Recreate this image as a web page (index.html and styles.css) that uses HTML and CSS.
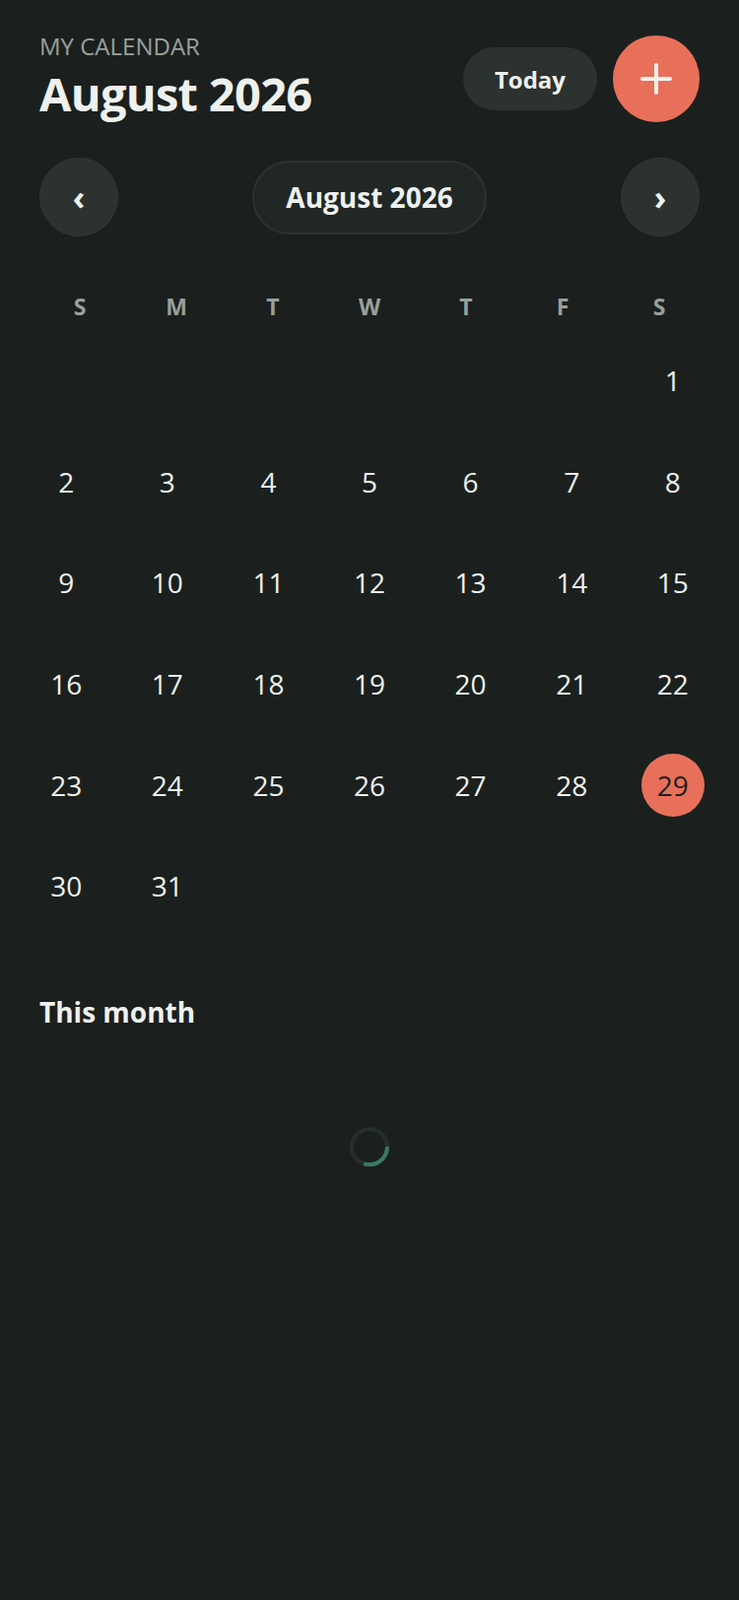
FILE: index.html
```html
<!DOCTYPE html>
<html lang="en">
<head>
    <meta charset="UTF-8">
    <meta name="viewport" content="width=device-width, initial-scale=1.0">
    <title>My Calendar</title>
    <link rel="stylesheet" href="styles.css">
</head>
<body>
    <div class="app">
        <div class="header">
            <div class="title-block">
                <p class="label">MY CALENDAR</p>
                <h1>August 2026</h1>
            </div>
            <div class="actions">
                <button class="today-btn">Today</button>
                <button class="add-btn" aria-label="Add event">
                    <svg width="32" height="32" viewBox="0 0 32 32">
                        <path d="M16 2 V30 M2 16 H30" stroke="#f4f1ee" stroke-width="4" stroke-linecap="round" fill="none"/>
                    </svg>
                </button>
            </div>
        </div>

        <div class="month-nav">
            <button class="nav-btn">&lsaquo;</button>
            <div class="month-pill">August 2026</div>
            <button class="nav-btn">&rsaquo;</button>
        </div>

        <div class="weekdays">
            <span>S</span><span>M</span><span>T</span><span>W</span><span>T</span><span>F</span><span>S</span>
        </div>

        <div class="days" id="days"></div>

        <h2 class="section-title">This month</h2>

        <div class="loading">
            <svg class="spinner" width="40" height="40" viewBox="0 0 40 40">
                <circle cx="20" cy="20" r="18" stroke="#243029" stroke-width="4" fill="none"/>
                <circle cx="20" cy="20" r="18" stroke="#3b7a61" stroke-width="4" fill="none" stroke-dasharray="34 200"/>
            </svg>
        </div>
    </div>

    <script>
        // August 2026 starts on a Saturday
        const firstDay = 6;
        const daysInMonth = 31;
        const today = 29;

        const grid = document.getElementById('days');
        for (let i = 0; i < firstDay; i++) {
            const empty = document.createElement('div');
            empty.className = 'day';
            grid.appendChild(empty);
        }
        for (let d = 1; d <= daysInMonth; d++) {
            const cell = document.createElement('div');
            cell.className = 'day';
            const num = document.createElement('span');
            num.className = d === today ? 'num today' : 'num';
            num.innerText = d;
            cell.appendChild(num);
            grid.appendChild(cell);
        }
    </script>
</body>
</html>
```

FILE: styles.css
```css
body {
    font-family: "Open Sans", "Noto Sans", sans-serif;
    margin: 0;
    padding: 0;
    background-color: #1b201e;
    color: #eef1ee;
}
.app {
    padding: 36px 40px 40px;
}
.header {
    display: flex;
    justify-content: space-between;
    align-items: flex-start;
}
.title-block {
    padding-top: 1px;
}
.label {
    margin: 0 0 12px;
    font-size: 24px;
    line-height: 20px;
    color: #9aa19c;
    font-weight: 400;
}
h1 {
    margin: 0;
    font-size: 47px;
    line-height: 52px;
    font-weight: 700;
    letter-spacing: -0.7px;
    color: #eef1ee;
}
.actions {
    display: flex;
    align-items: center;
    gap: 16px;
    height: 88px;
}
button {
    font-family: inherit;
    border: none;
    cursor: pointer;
    color: #eef1ee;
}
.today-btn {
    height: 64px;
    padding: 0 32px;
    border-radius: 32px;
    background-color: #2c3230;
    font-size: 24px;
    font-weight: 700;
}
.add-btn {
    width: 88px;
    height: 88px;
    border-radius: 50%;
    background-color: #e8705a;
    display: flex;
    align-items: center;
    justify-content: center;
    padding: 0;
}
.month-nav {
    display: flex;
    justify-content: space-between;
    align-items: center;
    margin-top: 36px;
}
.nav-btn {
    width: 80px;
    height: 80px;
    border-radius: 50%;
    background-color: #2c3230;
    border: 1px solid #313835;
    font-size: 34px;
    font-weight: 700;
    display: flex;
    align-items: center;
    justify-content: center;
    padding: 0;
}
.month-pill {
    height: 71px;
    padding: 0 32px;
    border-radius: 38px;
    border: 2px solid #2b322f;
    background-color: #212725;
    display: flex;
    align-items: center;
    font-size: 28px;
    font-weight: 700;
}
.weekdays {
    display: grid;
    grid-template-columns: repeat(7, 1fr);
    margin: 51px -8px 4px;
}
.weekdays span {
    text-align: center;
    font-size: 23px;
    line-height: 40px;
    font-weight: 700;
    color: #98a09b;
}
.days {
    display: grid;
    grid-template-columns: repeat(7, 1fr);
    margin: 0 -24px;
}
.day {
    aspect-ratio: 1;
    display: flex;
    align-items: center;
    justify-content: center;
}
.num {
    width: 64px;
    height: 64px;
    border-radius: 50%;
    display: flex;
    align-items: center;
    justify-content: center;
    font-size: 28px;
    color: #eef1ee;
}
.num.today {
    background-color: #e8705a;
    color: #1b201e;
}
.section-title {
    margin: 58px 0 0;
    font-size: 28px;
    line-height: 38px;
    font-weight: 700;
}
.loading {
    display: flex;
    justify-content: center;
    padding-top: 98px;
}
```
